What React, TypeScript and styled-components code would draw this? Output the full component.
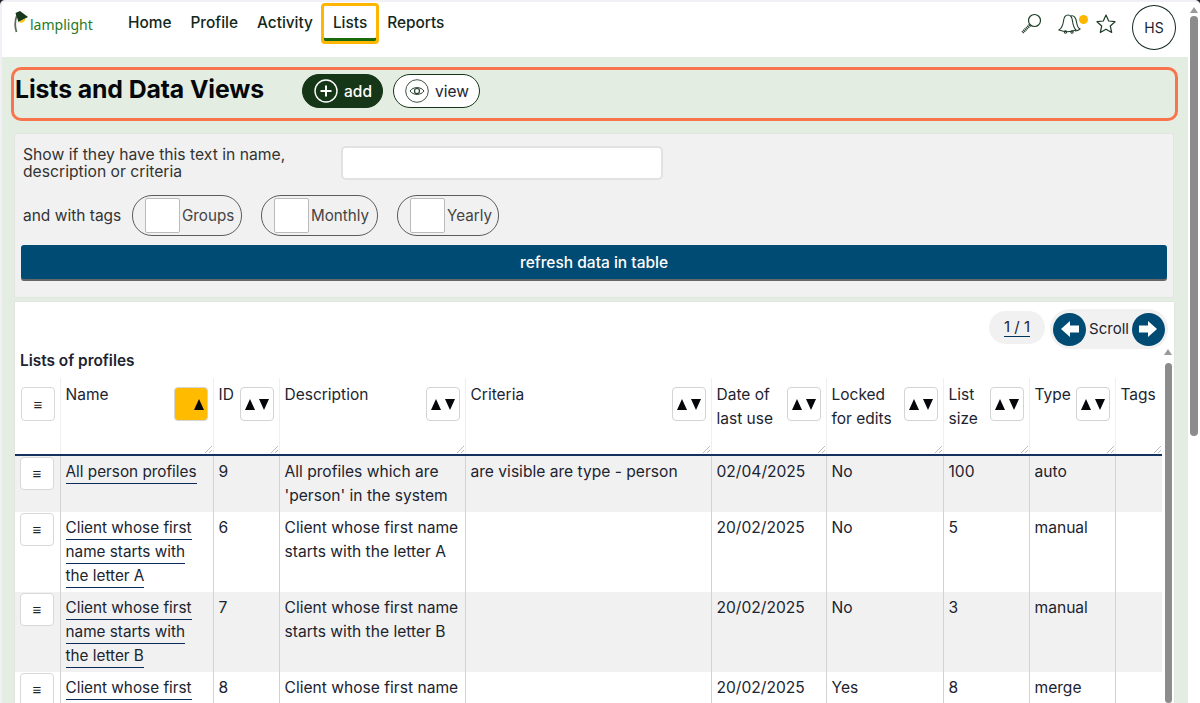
import React from "react";
import styled, { createGlobalStyle } from "styled-components";

const GlobalStyle = createGlobalStyle`
  html, body {
    margin: 0;
    padding: 0;
    height: 100%;
    overflow: hidden;
    background: #20242a;
    font-family: Inter, "Noto Sans", sans-serif;
    color: #1c2430;
  }
  * { box-sizing: border-box; }
`;

const Window = styled.div`
  display: flex;
  height: 703px;
  width: 1200px;
  padding: 2px 0 0 2px;
  overflow: hidden;
  background: #f0f0f6;
  border-radius: 5px 5px 0 0;
`;

const Page = styled.div`
  width: 1186px;
  display: flex;
  flex-direction: column;
`;

const ScrollTrack = styled.div<{ $w: number }>`
  width: ${(p) => p.$w}px;
  flex-shrink: 0;
  display: flex;
  flex-direction: column;
  align-items: center;
  background: #fff;
`;

const ScrollUp = styled.div`
  width: 0;
  height: 0;
  margin-top: 5px;
  border-left: 4px solid transparent;
  border-right: 4px solid transparent;
  border-bottom: 6px solid #9a9a9a;
`;

const ScrollThumb = styled.div<{ $h: number; $mt: number; $w: number }>`
  width: ${(p) => p.$w}px;
  height: ${(p) => p.$h}px;
  margin-top: ${(p) => p.$mt}px;
  border-radius: 4px;
  background: #8c8c8c;
`;

const Header = styled.header`
  height: 55px;
  flex-shrink: 0;
  background: #fff;
  display: flex;
  align-items: flex-start;
  padding-top: 1px;
`;

const Logo = styled.div`
  width: 116.5px;
  display: flex;
  align-items: flex-start;
  padding: 8px 0 0 12px;
`;

const LogoText = styled.span`
  font-family: "Noto Sans", sans-serif;
  font-size: 14px;
  line-height: 20px;
  color: #1f7a1f;
  margin-top: 4px;
`;

const Nav = styled.nav`
  display: flex;
`;

const NavItem = styled.a<{ $active?: boolean; $afterActive?: boolean }>`
  height: 41px;
  padding: 11px 9.5px 0;
  margin-left: ${(p) => (p.$afterActive ? -1.5 : 0)}px;
  font-size: 15.4px;
  font-weight: 500;
  line-height: 18px;
  color: #12281c;
  border-radius: 4px;
  ${(p) =>
    p.$active &&
    `
    margin-left: -1.5px;
    border: 3px solid #ffb600;
    padding: 8px 9px 0;
    box-shadow: inset 0 -3px 0 #1a6b0c;
  `}
`;

const HeaderIcons = styled.div`
  margin-left: auto;
  display: flex;
  align-items: flex-start;
`;

const IconSlot = styled.div<{ $w: number }>`
  width: ${(p) => p.$w}px;
  padding-top: 10px;
  position: relative;
  color: #1f3d28;
`;

const NoticeDot = styled.span`
  position: absolute;
  left: 22px;
  top: 12px;
  width: 9px;
  height: 9px;
  border-radius: 50%;
  background: #ffb600;
`;

const Avatar = styled.div`
  width: 44px;
  height: 45px;
  margin: 2px 12px 0 0;
  border-radius: 50%;
  border: 1.5px solid #12281c;
  display: flex;
  align-items: center;
  justify-content: center;
  font-size: 14px;
  color: #1c2430;
`;

const Content = styled.main`
  flex: 1;
  min-height: 0;
  background: #e3ede1;
  padding: 10px 10px 0 9px;
  display: flex;
  flex-direction: column;
  overflow: hidden;
`;

const TitleBar = styled.div`
  height: 54px;
  flex-shrink: 0;
  border: 3px solid #f7744c;
  border-radius: 10px;
  display: flex;
  align-items: flex-start;
  padding: 5px 0 0 1px;
`;

const Title = styled.h1`
  margin: 0;
  width: 287px;
  font-size: 24.8px;
  line-height: 28px;
  font-weight: 700;
  color: #05070a;
  letter-spacing: -0.1px;
`;

const PillButton = styled.button<{ $dark?: boolean }>`
  height: 34px;
  margin-top: -1px;
  margin-right: 10px;
  padding: 0 10px 0 11px;
  display: flex;
  align-items: center;
  gap: 6px;
  border-radius: 17px;
  border: 1.5px solid #163618;
  background: ${(p) => (p.$dark ? "#163618" : "#fff")};
  color: ${(p) => (p.$dark ? "#fff" : "#1c2430")};
  font-family: inherit;
  font-size: 15.5px;
  font-weight: ${(p) => (p.$dark ? 500 : 400)};
`;

const FilterPanel = styled.section`
  margin: 12px 4px 0 3px;
  height: 165px;
  flex-shrink: 0;
  background: #f1f1f1;
  border: 1px solid #e2e6e0;
  padding: 12px 6px 0 6px;
  display: flex;
  flex-direction: column;
`;

const SearchRow = styled.div`
  display: flex;
  align-items: flex-start;
`;

const SearchLabel = styled.label`
  width: 320px;
  padding: 0 0 0 2px;
  font-size: 15.7px;
  line-height: 17px;
  color: #333;
`;

const SearchInput = styled.input`
  width: 322px;
  height: 34px;
  background: #fff;
  border: 2px solid #e2e2e2;
  border-radius: 5px;
`;

const TagRow = styled.div`
  margin-top: 15px;
  display: flex;
  align-items: center;
  gap: 19px;
`;

const TagLabel = styled.span`
  width: 92px;
  padding-left: 2px;
  white-space: nowrap;
  font-size: 15.5px;
  color: #333;
`;

const TagPill = styled.label<{ $w: number }>`
  width: ${(p) => p.$w}px;
  height: 41px;
  border: 1px solid #5c5c5c;
  border-radius: 20px;
  display: flex;
  align-items: center;
  padding-left: 12px;
  gap: 2px;
  font-size: 15.2px;
  color: #444;
`;

const TagBox = styled.span`
  width: 35px;
  height: 35px;
  flex-shrink: 0;
  background: #fff;
  border: 1px solid #bbb;
  border-radius: 2px;
`;

const RefreshButton = styled.button`
  margin-top: 9px;
  height: 34px;
  width: 100%;
  flex-shrink: 0;
  border: none;
  border-radius: 3px;
  padding-bottom: 1px;
  background: #004b73;
  box-shadow: 0 2px 0 #666;
  color: #fff;
  font-family: inherit;
  font-size: 15.5px;
  font-weight: 500;
`;

const TablePanel = styled.section`
  margin: 3px 3px 0 3px;
  flex: 1;
  min-height: 0;
  background: #fff;
  border: 1px solid #e2e6e0;
  border-bottom: none;
  display: flex;
  flex-direction: column;
`;

const Pager = styled.div`
  height: 42px;
  flex-shrink: 0;
  display: flex;
  justify-content: flex-end;
  align-items: flex-start;
  gap: 5px;
  padding: 7px 6px 0 0;
`;

const PageCount = styled.div`
  margin-top: 2px;
  height: 33px;
  width: 56px;
  border-radius: 17px;
  background: #f1f1f1;
  display: flex;
  align-items: center;
  justify-content: center;
`;

const PageCountText = styled.span`
  font-size: 15px;
  line-height: 18px;
  border-bottom: 1px solid #00355a;
`;

const ScrollPill = styled.div`
  height: 40px;
  width: 118px;
  padding: 0 3px;
  border-radius: 20px;
  background: #f1f1f1;
  display: flex;
  align-items: center;
  justify-content: space-between;
  font-size: 15px;
`;

const ScrollLabel = styled.span`
  margin-top: -2px;
`;

const ArrowCircle = styled.span`
  width: 33px;
  height: 33px;
  border-radius: 50%;
  background: #004b73;
  display: flex;
  align-items: center;
  justify-content: center;
`;

const TableArea = styled.div`
  flex: 1;
  min-height: 0;
  display: flex;
`;

const TableColumn = styled.div`
  width: 1147px;
  overflow: hidden;
`;

const ListTitle = styled.h2`
  margin: 0;
  height: 34px;
  padding: 8px 0 0 5px;
  font-size: 15.4px;
  line-height: 18px;
  font-weight: 600;
  color: #1c2430;
`;

const Table = styled.table`
  border-collapse: collapse;
  table-layout: fixed;
  width: 1147px;
`;

const Th = styled.th`
  position: relative;
  height: 77px;
  padding: 5px 5px 0 5px;
  vertical-align: top;
  text-align: left;
  font-size: 15.5px;
  line-height: 24px;
  font-weight: 400;
  color: #1c2430;
  border-right: 1px solid #efefef;
  border-bottom: 2px solid #14325f;
`;

const SortButton = styled.span<{ $active?: boolean }>`
  float: right;
  width: 34px;
  height: 34px;
  margin: 4px 0 0 4px;
  display: flex;
  align-items: center;
  justify-content: ${(p) => (p.$active ? "flex-end" : "center")};
  gap: 4px;
  padding-right: ${(p) => (p.$active ? 3 : 0)}px;
  background: ${(p) => (p.$active ? "#ffbb00" : "#fff")};
  border: 1px solid #d4d4d4;
  border-radius: 4px;
`;

const Tri = styled.span<{ $down?: boolean }>`
  width: 0;
  height: 0;
  border-left: 5.5px solid transparent;
  border-right: 5.5px solid transparent;
  ${(p) => (p.$down ? "border-top" : "border-bottom")}: 11px solid #05070a;
`;

const MenuButton = styled.span<{ $head?: boolean }>`
  width: 34px;
  height: ${(p) => (p.$head ? 34 : 33)}px;
  margin: ${(p) => (p.$head ? "4px 0 0 1px" : "1px 0 0 0")};
  display: flex;
  align-items: center;
  justify-content: center;
  background: #fff;
  border: 1px solid #d8d8d8;
  border-radius: 4px;
  font-size: 15px;
  line-height: 1;
  font-weight: 500;
  color: #222;
`;

const Grip = styled.svg`
  position: absolute;
  right: 1px;
  bottom: 1px;
`;

const Tr = styled.tr<{ $shaded: boolean; $h: number }>`
  height: ${(p) => p.$h}px;
  background: ${(p) => (p.$shaded ? "#f1f1f1" : "#fff")};
`;

const Td = styled.td`
  padding: 4.4px 5px 0 5px;
  vertical-align: top;
  font-size: 15.6px;
  line-height: 23.67px;
  color: #1c2430;
  border-right: 1px solid #d2d2d2;
`;

const MenuCell = styled(Td)`
  padding-top: 0;
`;

const NameLink = styled.a`
  color: #1c2430;
  border-bottom: 1px solid #0f2a5c;
  padding-bottom: 2px;
  font-size: 15.3px;
`;

type Row = {
  id: number;
  name: string;
  description: string;
  criteria: string;
  date: string;
  locked: string;
  size: number;
  type: string;
  h: number;
};

const columns: { label: string; w: number; sort: boolean }[] = [
  { label: "Name", w: 153, sort: true },
  { label: "ID", w: 66, sort: true },
  { label: "Description", w: 186, sort: true },
  { label: "Criteria", w: 246, sort: true },
  { label: "Date of last use", w: 115, sort: true },
  { label: "Locked for edits", w: 117, sort: true },
  { label: "List size", w: 86, sort: true },
  { label: "Type", w: 86, sort: true },
  { label: "Tags", w: 47, sort: false },
];

const rows: Row[] = [
  {
    id: 9,
    name: "All person profiles",
    description: "All profiles which are 'person' in the system",
    criteria: "are visible are type - person",
    date: "02/04/2025",
    locked: "No",
    size: 100,
    type: "auto",
    h: 57,
  },
  {
    id: 6,
    name: "Client whose first name starts with the letter A",
    description: "Client whose first name starts with the letter A",
    criteria: "",
    date: "20/02/2025",
    locked: "No",
    size: 5,
    type: "manual",
    h: 80,
  },
  {
    id: 7,
    name: "Client whose first name starts with the letter B",
    description: "Client whose first name starts with the letter B",
    criteria: "",
    date: "20/02/2025",
    locked: "No",
    size: 3,
    type: "manual",
    h: 80,
  },
  {
    id: 8,
    name: "Client whose first name starts with the letter C",
    description: "Client whose first name starts with the letter C",
    criteria: "",
    date: "20/02/2025",
    locked: "Yes",
    size: 8,
    type: "merge",
    h: 80,
  },
];

const LampLogo = () => (
  <svg width="16" height="22" viewBox="0 0 16 22">
    <path d="M2.500 21 C0.500 15 1 9 3 4" fill="none" stroke="#5d6b55" strokeWidth="1.800" />
    <path d="M1.500 2 L6 0 L14 6 L4.500 11 Z" fill="#17381c" />
    <path d="M4.500 11 L11.500 7.500 C11 11 7.500 13 4.500 11 Z" fill="#ffc400" />
  </svg>
);

const SearchIcon = () => (
  <svg width="22" height="22" viewBox="0 0 22 22" fill="none" stroke="currentColor">
    <circle cx="14.500" cy="7.500" r="6" strokeWidth="1.200" />
    <path d="M10 12 L2.500 19.500" strokeWidth="3" strokeDasharray="1.200 0.700" />
  </svg>
);

const BellsIcon = () => (
  <svg width="24" height="22" viewBox="0 0 24 22" fill="none" stroke="currentColor" strokeWidth="1.100">
    <path d="M2 17 C5 15 6 12 6.500 8 C7 4 9 2 11 2 C13 2 15 4 15.500 8 C16 12 17 15 19 17 C14 19 7 19 2 17 Z" />
    <path d="M14 3 C17 2 19 5 19.500 9 C20 12 21 15 23 16 C22 17 20 18 18 18" />
    <circle cx="8.500" cy="19" r="1.200" />
    <circle cx="15" cy="19" r="1.200" />
  </svg>
);

const StarIcon = () => (
  <svg width="22" height="22" viewBox="0 0 22 22" fill="none" stroke="currentColor" strokeWidth="1.200" strokeLinejoin="round">
    <path d="M11 2 L13.700 8 L20 8.700 L15.300 13 L16.700 19.500 L11 16.200 L5.300 19.500 L6.700 13 L2 8.700 L8.300 8 Z" />
  </svg>
);

const AddIcon = () => (
  <svg width="24" height="24" viewBox="0 0 24 24" fill="none" stroke="#fff">
    <circle cx="12" cy="12" r="11" strokeWidth="1.400" />
    <path d="M12 6.500 V17.500 M6.500 12 H17.500" strokeWidth="2" />
  </svg>
);

const ViewIcon = () => (
  <svg width="24" height="24" viewBox="0 0 24 24" fill="none" stroke="#2a4030">
    <circle cx="12" cy="12" r="11.300" strokeWidth="0.900" />
    <path d="M5 12 C8 7.500 16 7.500 19 12 C16 16.500 8 16.500 5 12 Z" strokeWidth="1" />
    <circle cx="12" cy="12" r="2.500" strokeWidth="1.200" />
  </svg>
);

const Arrow = ({ left }: { left?: boolean }) => (
  <svg width="20" height="18" viewBox="0 0 20 18" style={{ transform: left ? "scaleX(-1)" : undefined }}>
    <path d="M1 5.500 H10 V1 L19 9 L10 17 V12.500 H1 Z" fill="#fff" />
  </svg>
);

const ResizeGrip = () => (
  <Grip width="7" height="7" viewBox="0 0 7 7" stroke="#aaa" strokeWidth="0.800">
    <path d="M0 7 L7 0 M4 7 L7 4" />
  </Grip>
);

const App: React.FC = () => {
  return (
    <>
      <GlobalStyle />
      <Window>
        <Page>
          <Header>
            <Logo>
              <LampLogo />
              <LogoText>lamplight</LogoText>
            </Logo>
            <Nav>
              <NavItem>Home</NavItem>
              <NavItem>Profile</NavItem>
              <NavItem>Activity</NavItem>
              <NavItem $active>Lists</NavItem>
              <NavItem $afterActive>Reports</NavItem>
            </Nav>
            <HeaderIcons>
              <IconSlot $w={37}>
                <SearchIcon />
              </IconSlot>
              <IconSlot $w={38}>
                <BellsIcon />
                <NoticeDot />
              </IconSlot>
              <IconSlot $w={37}>
                <StarIcon />
              </IconSlot>
              <Avatar>HS</Avatar>
            </HeaderIcons>
          </Header>
          <Content>
            <TitleBar>
              <Title>Lists and Data Views</Title>
              <PillButton $dark>
                <AddIcon />
                add
              </PillButton>
              <PillButton>
                <ViewIcon />
                view
              </PillButton>
            </TitleBar>
            <FilterPanel>
              <SearchRow>
                <SearchLabel>
                  Show if they have this text in name,
                  <br />
                  description or criteria
                </SearchLabel>
                <SearchInput />
              </SearchRow>
              <TagRow>
                <TagLabel>and with tags</TagLabel>
                <TagPill $w={110}>
                  <TagBox />
                  Groups
                </TagPill>
                <TagPill $w={117}>
                  <TagBox />
                  Monthly
                </TagPill>
                <TagPill $w={102}>
                  <TagBox />
                  Yearly
                </TagPill>
              </TagRow>
              <RefreshButton>refresh data in table</RefreshButton>
            </FilterPanel>
            <TablePanel>
              <Pager>
                <PageCount>
                  <PageCountText>1 / 1</PageCountText>
                </PageCount>
                <ScrollPill>
                  <ArrowCircle>
                    <Arrow left />
                  </ArrowCircle>
                  <ScrollLabel>Scroll</ScrollLabel>
                  <ArrowCircle>
                    <Arrow />
                  </ArrowCircle>
                </ScrollPill>
              </Pager>
              <TableArea>
                <TableColumn>
                  <ListTitle>Lists of profiles</ListTitle>
                  <Table>
                    <colgroup>
                      <col style={{ width: 45 }} />
                      {columns.map((c) => (
                        <col key={c.label} style={{ width: c.w }} />
                      ))}
                    </colgroup>
                    <thead>
                      <tr>
                        <Th>
                          <MenuButton $head>≡</MenuButton>
                        </Th>
                        {columns.map((c, i) => (
                          <Th key={c.label}>
                            {c.sort && (
                              <SortButton $active={i === 0}>
                                <Tri />
                                {i !== 0 && <Tri $down />}
                              </SortButton>
                            )}
                            {c.label}
                            <ResizeGrip />
                          </Th>
                        ))}
                      </tr>
                    </thead>
                    <tbody>
                      {rows.map((r, i) => (
                        <Tr key={r.id} $shaded={i % 2 === 0} $h={r.h}>
                          <MenuCell>
                            <MenuButton>≡</MenuButton>
                          </MenuCell>
                          <Td>
                            <NameLink>{r.name}</NameLink>
                          </Td>
                          <Td>{r.id}</Td>
                          <Td>{r.description}</Td>
                          <Td>{r.criteria}</Td>
                          <Td>{r.date}</Td>
                          <Td>{r.locked}</Td>
                          <Td>{r.size}</Td>
                          <Td>{r.type}</Td>
                          <Td />
                        </Tr>
                      ))}
                    </tbody>
                  </Table>
                </TableColumn>
                <ScrollTrack $w={12}>
                  <ScrollUp />
                  <ScrollThumb $w={7} $h={340} $mt={8} />
                </ScrollTrack>
              </TableArea>
            </TablePanel>
          </Content>
        </Page>
        <ScrollTrack $w={12}>
          <ScrollUp />
          <ScrollThumb $w={8} $h={420} $mt={3} />
        </ScrollTrack>
      </Window>
    </>
  );
};

export default App;
